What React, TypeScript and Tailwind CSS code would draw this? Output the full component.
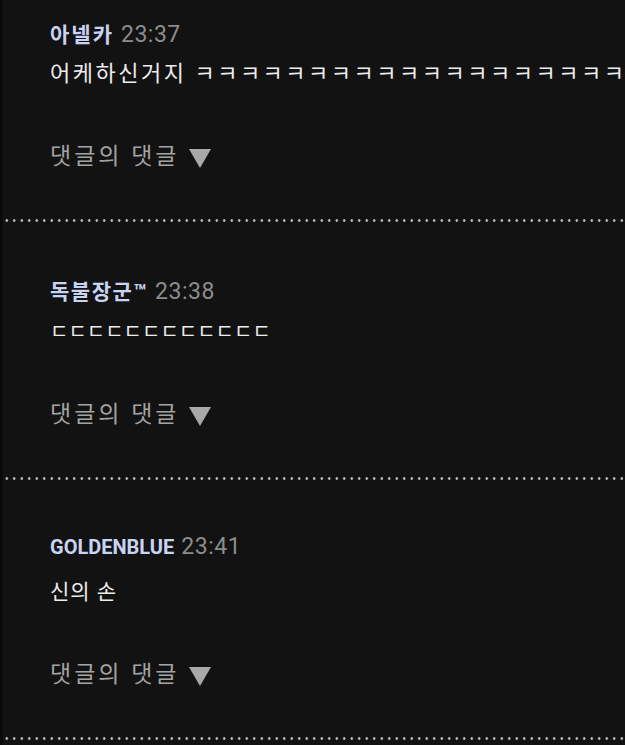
import React from 'react';

type Comment = {
  name: string;
  nameClass: string;
  time: string;
  body: string;
  bodyClass: string;
  top: string;
};

const comments: Comment[] = [
  {
    name: '아넬카',
    nameClass: 'text-[21px] tracking-[2px]',
    time: '23:37',
    body: '어케하신거지 ' + 'ㅋ'.repeat(24),
    bodyClass: 'mt-[9px] text-[22px] tracking-[2.5px]',
    top: 'pt-[20px]',
  },
  {
    name: '독불장군™',
    nameClass: 'text-[21px] tracking-[1.5px]',
    time: '23:38',
    body: 'ㄷ'.repeat(12),
    bodyClass: 'mt-[10px] text-[20px]',
    top: 'pt-[55px]',
  },
  {
    name: 'GOLDENBLUE',
    nameClass: 'text-[20px]',
    time: '23:41',
    body: '신의 손',
    bodyClass: 'mt-[15px] text-[21px] tracking-[1px]',
    top: 'pt-[52px]',
  },
];

const Divider = () => (
  <div className="h-[3px] w-full bg-[radial-gradient(circle,#c4c4c4_1px,transparent_1.6px)] bg-[length:7.5px_3px]" />
);

const CommentItem = ({ c }: { c: Comment }) => {
  return (
    <div className={`${c.top} pb-[47px] pl-[47px]`}>
      <div className="flex items-baseline gap-[7px] leading-[30px]">
        <span className={`${c.nameClass} font-bold text-[#c9d3f2]`}>{c.name}</span>
        <span className="text-[23px] tracking-[0.5px] text-[#8c8c8c]">{c.time}</span>
      </div>
      <div className={`${c.bodyClass} overflow-hidden whitespace-nowrap leading-[30px] text-[#ececec]`}>
        {c.body}
      </div>
      <div className="mt-[53px] flex items-center gap-[8px] text-[23px] leading-[30px] tracking-[3px] text-[#a3a3a3]">
        <span>댓글의 댓글</span>
        <svg width="24" height="22" viewBox="0 0 24 22" className="mt-[2px]">
          <path d="M1 2 H23 L12 21 Z" fill="#a8a8a8" />
        </svg>
      </div>
    </div>
  );
};

export default function App() {
  return (
    <div
      className="h-[745px] w-[625px] overflow-hidden border-l-[3px] border-[#0a0a0a] bg-[#121212]"
      style={{ fontFamily: 'Roboto, "Noto Sans CJK KR", sans-serif' }}
    >
      {comments.map((c, i) => (
        <div key={i}>
          <CommentItem c={c} />
          <Divider />
        </div>
      ))}
    </div>
  );
}
